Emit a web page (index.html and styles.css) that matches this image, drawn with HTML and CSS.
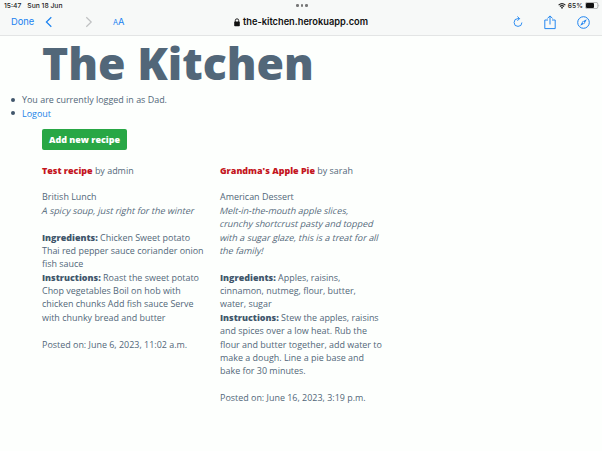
FILE: index.html
```html
<!DOCTYPE html>
<html lang="en">
<head>
<meta charset="utf-8">
<title>The Kitchen</title>
<link rel="stylesheet" href="styles.css">
</head>
<body>
<header class="chrome">
  <div class="status">
    <div class="clock"><span>15:47</span><span>Sun 18 Jun</span></div>
    <div class="dots"><i></i><i></i><i></i></div>
    <div class="power">
      <svg width="8" height="6" viewBox="0 0 8 6"><path d="M.6 2.1Q4-.8 7.4 2.1M1.9 3.5Q4 1.8 6.1 3.5" fill="none" stroke="#222" stroke-width="1.1"/><path d="M2.8 4.5Q4 3.6 5.2 4.5L4 5.9Z" fill="#222"/></svg>
      <span class="percent">65%</span>
      <svg width="15" height="7" viewBox="0 0 15 7"><rect x=".4" y=".4" width="12.4" height="6.2" rx="1.7" fill="none" stroke="#999" stroke-width=".7"/><rect x="1" y="1" width="8" height="5" rx="1" fill="#111"/><path d="M13.6 2.3q1.2 1.2 0 2.4z" fill="#999"/></svg>
    </div>
  </div>
  <nav class="toolbar">
    <div class="left">
      <span class="done">Done</span>
      <svg class="back" width="8" height="12" viewBox="0 0 8 12"><path d="M6.3 1.2L1.4 6l4.9 4.8" fill="none" stroke="#1a82f0" stroke-width="1.2"/></svg>
      <svg class="forward" width="8" height="12" viewBox="0 0 8 12"><path d="M1.3 1.2L6.2 6l-4.9 4.8" fill="none" stroke="#bfc1c2" stroke-width="1.2"/></svg>
      <span class="text-size"><small>A</small>A</span>
    </div>
    <div class="address">
      <svg width="6" height="9" viewBox="0 0 6 9"><rect x=".2" y="3.6" width="5.6" height="4.6" rx=".8" fill="#111"/><path d="M1.3 4V2.5a1.7 1.7 0 0 1 3.4 0V4" fill="none" stroke="#111" stroke-width=".9"/></svg>
      <span>the-kitchen.herokuapp.com</span>
    </div>
    <div class="right">
      <svg width="10" height="12" viewBox="0 0 10 12"><path d="M8.9 6.5A3.9 3.9 0 1 1 5 2.6h1.5M4.4.5l2.2 2.1-2.2 2.2" fill="none" stroke="#1a82f0" stroke-width=".9"/></svg>
      <svg width="12" height="15" viewBox="0 0 12 15"><path d="M4 5H.8v8.6h10.4V5H8M6 9.5V1M3.4 3.5L6 .9l2.6 2.6" fill="none" stroke="#1a82f0" stroke-width=".95"/></svg>
      <svg width="13" height="13" viewBox="0 0 13 13"><circle cx="6.5" cy="6.5" r="5.8" fill="none" stroke="#1a82f0"/><path d="M9.8 3.2L7.6 7.6 3.2 9.8 5.4 5.4Z" fill="#1a82f0"/><circle cx="6.5" cy="6.5" r=".9" fill="#f7f8f8"/></svg>
    </div>
  </nav>
</header>
<main>
  <h1>The Kitchen</h1>
  <ul class="account">
    <li>You are currently logged in as Dad.</li>
    <li><a href="#">Logout</a></li>
  </ul>
  <a class="button" href="#">Add new recipe</a>
  <div class="recipes">
    <article>
      <p><b class="name">Test recipe</b> by admin</p>
      <p>British Lunch<br><span class="slant">A spicy soup, just right for the winter</span></p>
      <p><b>Ingredients:</b> Chicken Sweet potato<br>Thai red pepper sauce coriander onion<br>fish sauce<br><b>Instructions:</b> Roast the sweet potato<br>Chop vegetables Boil on hob with<br>chicken chunks Add fish sauce Serve<br>with chunky bread and butter</p>
      <p>Posted on: June 6, 2023, 11:02 a.m.</p>
    </article>
    <article>
      <p><b class="name">Grandma's Apple Pie</b> by sarah</p>
      <p>American Dessert<br><span class="slant">Melt-in-the-mouth apple slices,</span><span class="slant">crunchy shortcrust pasty and topped</span><span class="slant">with a sugar glaze, this is a treat for all</span><span class="slant">the family!</span></p>
      <p><b>Ingredients:</b> Apples, raisins,<br>cinnamon, nutmeg, flour, butter,<br>water, sugar<br><b>Instructions:</b> Stew the apples, raisins<br>and spices over a low heat. Rub the<br>flour and butter together, add water to<br>make a dough. Line a pie base and<br>bake for 30 minutes.</p>
      <p>Posted on: June 16, 2023, 3:19 p.m.</p>
    </article>
  </div>
</main>
</body>
</html>
```
FILE: styles.css
```css
* { box-sizing: border-box; }
body {
  margin: 0;
  height: 451px;
  overflow: hidden;
  background: #fdfffd;
  color: #526779;
  font: 8.95px/13.38px "Open Sans", sans-serif;
}
a { color: #1a82e8; text-decoration: none; }
svg { display: block; flex: none; }
.chrome {
  height: 36px;
  background: #f7f9f8;
  border-bottom: 1px solid #e3e5e5;
  font-family: Inter, "Liberation Sans", sans-serif;
  color: #222;
}
.status, .toolbar {
  display: grid;
  grid-template-columns: 1fr auto 1fr;
  align-items: center;
}
.status {
  height: 11px;
  padding: 0 2px 0 4px;
  font-size: 6.75px;
  font-weight: 500;
  line-height: 11px;
}
.clock { display: flex; gap: 6px; }
.dots { display: flex; gap: 2px; }
.dots i { width: 2.5px; height: 2.5px; border-radius: 50%; background: #777; }
.power { display: flex; align-items: center; justify-content: flex-end; gap: 2px; }
.toolbar { height: 22px; padding: 0 12px 0 11px; }
.left { display: flex; align-items: center; color: #1a82f0; font-size: 9.3px; }
.done { width: 34px; }
.forward { margin-left: 32px; }
.text-size { margin-left: 20px; }
.text-size small { font-size: 7.3px; }
.address {
  display: flex;
  align-items: center;
  gap: 3px;
  font-size: 9.25px;
  font-weight: 600;
  color: #111;
}
.address span { width: 124px; white-space: nowrap; }
.right { display: flex; align-items: center; justify-content: flex-end; gap: 21px; }
main { padding-left: 42px; }
h1 {
  margin: 0;
  height: 57.4px;
  font-size: 44.5px;
  line-height: 54px;
  font-weight: 800;
}
.account { margin: 0 0 8.7px -31px; padding: 0; list-style: none; }
.account li { display: flex; align-items: center; gap: 7px; }
.account li::before {
  content: "";
  width: 4px;
  height: 4px;
  border-radius: 50%;
  background: #40566b;
}
.button {
  display: block;
  width: 85px;
  height: 21px;
  border-radius: 2px;
  background: #28a745;
  color: #fff;
  font-weight: 800;
  line-height: 21px;
  text-align: center;
}
.recipes {
  display: grid;
  grid-template-columns: 178px 178px;
  margin-top: 13.9px;
  white-space: nowrap;
}
p { margin: 0 0 13.38px; }
b { font-weight: 800; color: #40566b; }
.name { color: #c4161f; }
.slant { display: block; transform: skewX(-14deg); }
```
